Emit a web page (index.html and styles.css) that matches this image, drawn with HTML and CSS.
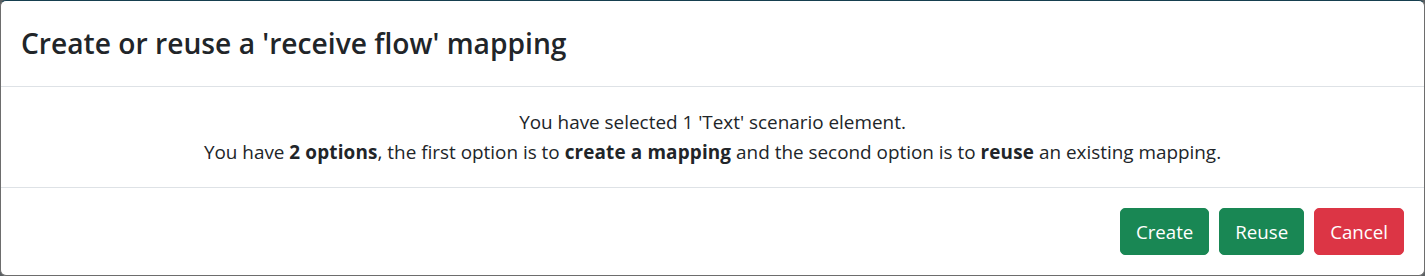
FILE: index.html
```html
<!DOCTYPE html>
<html lang="en">
<head>
<meta charset="utf-8">
<title>Create or reuse a 'receive flow' mapping</title>
<link rel="stylesheet" href="styles.css">
</head>
<body>
<div class="modal">
  <div class="modal-header">
    <h4 class="modal-title">Create or reuse a 'receive flow' mapping</h4>
  </div>
  <div class="modal-body">
    <div>You have selected 1 'Text' scenario element.</div>
    <div>You have <b>2 options</b>, the first option is to <b>create a mapping</b> and the second option is to <b>reuse</b> an existing mapping.</div>
  </div>
  <div class="modal-footer">
    <button class="btn btn-success">Create</button>
    <button class="btn btn-success">Reuse</button>
    <button class="btn btn-danger">Cancel</button>
  </div>
</div>
</body>
</html>
```
FILE: styles.css
```css
html, body {
  margin: 0;
  padding: 0;
}
body {
  background: #5a5f62;
  font-family: "Open Sans", "Noto Sans", sans-serif;
  color: #212529;
  font-size: 18.9px;
  line-height: 30px;
}
.modal {
  box-sizing: border-box;
  width: 1425px;
  height: 276px;
  background: #fff;
  border: 1px solid #6d6d6d;
  border-top-color: #163f4f;
  border-radius: 6px;
  display: flex;
  flex-direction: column;
}
.modal-header {
  padding: 20px;
  border-bottom: 1px solid #dee2e6;
}
.modal-title {
  margin: 0;
  font-size: 28.2px;
  font-weight: 600;
  line-height: 45px;
}
.modal-body {
  padding: 20px;
  text-align: center;
  height: 60px;
}
.modal-body b {
  font-weight: 700;
  letter-spacing: 0.15px;
}
.modal-footer {
  border-top: 1px solid #dee2e6;
  padding: 15px;
  display: flex;
  justify-content: flex-end;
}
.btn {
  font-family: inherit;
  font-size: 18.7px;
  line-height: 30px;
  padding: 7.5px 15px;
  margin: 5px;
  border: 1px solid transparent;
  border-radius: 5px;
  color: #fff;
}
.btn-success {
  background: #198754;
  border-color: #198754;
}
.btn-danger {
  background: #dc3545;
  border-color: #dc3545;
}
```
